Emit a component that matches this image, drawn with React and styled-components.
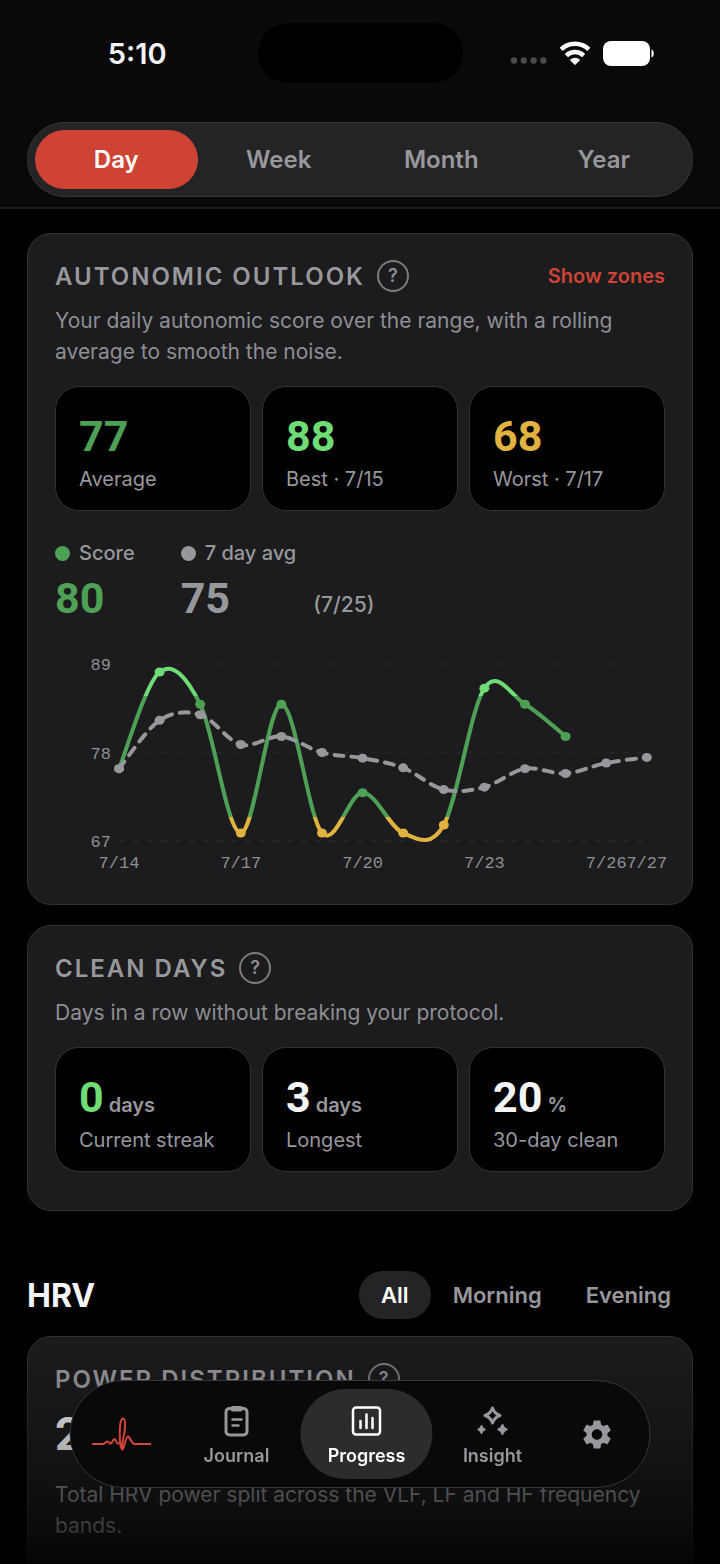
import React, { useState } from 'react';
import styled, { createGlobalStyle } from 'styled-components';
import { MdSettings } from 'react-icons/md';

const GlobalStyle = createGlobalStyle`
    * {
        box-sizing: border-box;
    }

    body {
        margin: 0;
        background: #000;
        color: #f5f5f7;
        font-family: Inter, "Liberation Sans", sans-serif;
    }

    button {
        border: 0;
        padding: 0;
        background: none;
        color: inherit;
        font: inherit;
        cursor: pointer;
    }
`;

const Screen = styled.div`
    display: flex;
    flex-direction: column;
    height: 100vh;
    overflow: hidden;
`;

const TopBar = styled.header`
    flex: none;
    padding: 23px 27px 10px;
    background: #09090b;
    border-bottom: 2px solid #1c1c1e;
`;

const StatusBar = styled.div`
    display: grid;
    grid-template-columns: 1fr 205px 1fr;
    align-items: center;
    margin-bottom: 39px;
`;

const Clock = styled.time`
    padding-right: 10px;
    text-align: center;
    font-size: 29px;
    font-weight: 600;
`;

const Island = styled.div`
    height: 60px;
    border-radius: 30px;
    background: #000;
`;

const StatusIcons = styled.div`
    display: flex;
    align-items: center;
    justify-content: flex-end;
    gap: 12px;
    padding-right: 39px;
`;

const Segments = styled.nav`
    display: grid;
    grid-template-columns: repeat(4, 1fr);
    padding: 7px;
    border: 1px solid #363639;
    border-radius: 38px;
    background: #242426;
`;

const Segment = styled.button`
    height: 59px;
    border-radius: 30px;
    font-size: 24px;
    font-weight: 600;
    color: ${(props) => (props.$active ? '#fff' : '#98989c')};
    background: ${(props) => (props.$active ? '#cf4335' : 'transparent')};
`;

const Content = styled.main`
    flex: 1;
    min-height: 0;
    overflow-y: auto;
    scrollbar-width: none;
    padding: 24px 27px 0;
`;

const Card = styled.section`
    margin-bottom: 20px;
    padding: 26px 27px ${(props) => (props.$chart ? 32 : 38)}px;
    border: 1px solid #323235;
    border-radius: 24px;
    background: #1c1c1e;
`;

const CardHeader = styled.div`
    display: flex;
    align-items: center;
    gap: 12px;
    height: 32px;
`;

const CardTitle = styled.h2`
    margin: 0;
    font-size: 24px;
    font-weight: 600;
    letter-spacing: 2px;
    color: #98989c;
`;

const HelpButton = styled.button`
    width: 32px;
    height: 32px;
    border: 2px solid #7c7c80;
    border-radius: 50%;
    font-size: 18px;
    font-weight: 600;
    line-height: 28px;
    color: #8e8e93;
`;

const ZonesButton = styled.button`
    margin-left: auto;
    font-size: 20px;
    font-weight: 600;
    color: #cf4335;
`;

const Description = styled.p`
    margin: 13px 0 19px;
    font-size: 21px;
    line-height: 31px;
    color: #8e8e93;
`;

const Tiles = styled.div`
    display: grid;
    grid-template-columns: repeat(3, 1fr);
    gap: 11px;
`;

const Tile = styled.div`
    height: 125px;
    padding: 24px 23px;
    border: 1px solid #323235;
    border-radius: 24px;
    background: #000;
`;

const BigNumber = styled.span`
    font-family: Roboto, "Liberation Sans", sans-serif;
    font-size: ${(props) => props.$size || 43}px;
    font-weight: 700;
    line-height: 50px;
    color: ${(props) => props.$color};
`;

const Unit = styled.span`
    margin-left: 5px;
    font-size: 20px;
    font-weight: 600;
    color: #98989c;
`;

const TileLabel = styled.div`
    font-size: 20px;
    line-height: 36px;
    color: #98989c;
`;

const Legend = styled.div`
    display: flex;
    align-items: flex-end;
    gap: 46px;
    margin-top: 27px;
`;

const LegendItem = styled.div`
    display: flex;
    flex-direction: column;
    gap: 5px;
`;

const LegendLabel = styled.div`
    display: flex;
    align-items: center;
    gap: 9px;
    font-size: 20px;
    font-weight: 500;
    line-height: 30px;
    color: #98989c;

    &::before {
        content: '';
        width: 15px;
        height: 15px;
        border-radius: 50%;
        background: ${(props) => props.$color};
    }
`;

const LegendDate = styled.span`
    margin-left: -29px;
    font-size: 21px;
    font-weight: 500;
    line-height: 36px;
    color: #98989c;
`;

const ChartSvg = styled.svg`
    display: block;
    width: 100%;
    height: auto;
    margin-top: 31px;
    overflow: visible;

    text {
        font-family: "Liberation Mono", monospace;
        font-size: 17px;
        fill: #8e8e93;
    }
`;

const SectionHeader = styled.div`
    display: flex;
    align-items: center;
    justify-content: space-between;
    margin: 60px 0 17px;
`;

const SectionTitle = styled.h1`
    margin: 0;
    font-size: 32px;
    font-weight: 700;
`;

const Filters = styled.div`
    display: flex;
`;

const Filter = styled.button`
    height: 48px;
    padding: 0 22px;
    border-radius: 24px;
    font-size: 22px;
    font-weight: 600;
    color: ${(props) => (props.$active ? '#fff' : '#98989c')};
    background: ${(props) => (props.$active ? '#242426' : 'transparent')};
`;

const PowerValue = styled.div`
    margin-top: 14px;
    height: 57px;
`;

const Fade = styled.div`
    position: fixed;
    left: 0;
    right: 0;
    bottom: 0;
    height: 230px;
    background: linear-gradient(transparent, rgba(0, 0, 0, 0.3) 55%, rgba(0, 0, 0, 0.6) 85%, rgba(0, 0, 0, 0.85));
    pointer-events: none;
`;

const TabBar = styled.nav`
    position: fixed;
    left: 50%;
    bottom: 76px;
    transform: translateX(-50%);
    display: flex;
    align-items: center;
    height: 108px;
    padding-right: 9px;
    border: 1px solid #363639;
    border-radius: 54px;
    background: #09090b;
`;

const Tab = styled.button`
    display: flex;
    flex-direction: column;
    align-items: center;
    justify-content: center;
    gap: 7px;
    width: ${(props) => props.$width}px;
    height: 90px;
    padding-top: 4px;
    border-radius: 45px;
    font-size: 18px;
    font-weight: 600;
    line-height: 24px;
    color: ${(props) => (props.$active ? '#fff' : '#98989c')};
    background: ${(props) => (props.$active ? '#2c2c2e' : 'transparent')};
`;

// Tab with an icon and no label
const IconTab = styled(Tab)`
    padding-top: 0;
`;

const scores = [76, 88, 84, 68, 84, 68, 73, 68, 69, 86, 84, 80];
const averages = [76, 82, 82.7, 79, 80, 78, 77.3, 76.1, 73.4, 73.7, 76, 75.4, 76.7, 77.4];
const gridValues = [89, 78, 67];
const dateLabels = [0, 3, 6, 9, 12, 13];

const GREEN = '#4ea055';
const BRIGHT = '#6fdc76';
const YELLOW = '#e0b341';
const GREY = '#98989c';

const xAt = (i) => 64 + i * 40.6;
const yAt = (value) => 10 + (89 - value) * 8.05;

// Cardinal spline through all the points
function linePath(values) {
    const points = values.map((v, i) => [xAt(i), yAt(v)]);
    let d = `M${points[0]}`;
    for (let i = 0; i < points.length - 1; i++) {
        const before = points[i - 1] || points[i];
        const from = points[i];
        const to = points[i + 1];
        const after = points[i + 2] || to;
        const c1 = [from[0] + (to[0] - before[0]) / 6, from[1] + (to[1] - before[1]) / 6];
        const c2 = [to[0] - (after[0] - from[0]) / 6, to[1] - (after[1] - from[1]) / 6];
        d += `C${c1} ${c2} ${to}`;
    }
    return d;
}

function zoneColor(value) {
    if (value >= 85) return BRIGHT;
    if (value < 70) return YELLOW;
    return GREEN;
}

function OutlookChart() {
    return (
        <ChartSvg viewBox="0 0 610 218" role="img" aria-label="Autonomic score by day">
            <defs>
                <linearGradient id="zones" gradientUnits="userSpaceOnUse" x1="0" x2="0" y1={yAt(89)} y2={yAt(67)}>
                    <stop offset={4 / 22} stopColor={BRIGHT} />
                    <stop offset={4 / 22} stopColor={GREEN} />
                    <stop offset={19 / 22} stopColor={GREEN} />
                    <stop offset={19 / 22} stopColor={YELLOW} />
                </linearGradient>
            </defs>
            {gridValues.map((value) => (
                <g key={value}>
                    <line x1="64" x2="592" y1={yAt(value)} y2={yAt(value)} stroke="#252527" strokeWidth="2" strokeDasharray="6 8" />
                    <text x="56" y={yAt(value) + 6} textAnchor="end">{value}</text>
                </g>
            ))}
            <path d={linePath(scores)} fill="none" stroke="url(#zones)" strokeWidth="4" strokeLinecap="round" />
            {scores.map((value, i) => (
                <ellipse key={i} cx={xAt(i)} cy={yAt(value)} rx="5" ry="4.5" fill={zoneColor(value)} />
            ))}
            <path d={linePath(averages)} fill="none" stroke={GREY} strokeWidth="4" strokeLinecap="round" strokeDasharray="9 8" />
            {averages.map((value, i) => (
                <ellipse key={i} cx={xAt(i)} cy={yAt(value)} rx="5" ry="4.5" fill={GREY} />
            ))}
            {dateLabels.map((i) => (
                <text key={i} x={xAt(i)} y="214" textAnchor="middle">7/{14 + i}</text>
            ))}
        </ChartSvg>
    );
}

function SignalIcons() {
    return (
        <StatusIcons>
            <svg width="37" height="24" viewBox="0 0 37 24" fill="#4b4b4d">
                <circle cx="4" cy="19.500" r="3.200" />
                <circle cx="13.800" cy="19.500" r="3.200" />
                <circle cx="23.600" cy="19.500" r="3.200" />
                <circle cx="33.400" cy="19.500" r="3.200" />
            </svg>
            <svg width="32" height="24" viewBox="0 0 32 24" fill="none" stroke="#fff" strokeWidth="4.500">
                <path d="M2.200 8.400a19.800 19.800 0 0 1 27.600 0" />
                <path d="M7.400 14.600a12.300 12.300 0 0 1 17.200 0" />
                <path d="M16 23.500l-4.600-4.500a7 7 0 0 1 9.200 0z" fill="#fff" stroke="#fff" strokeWidth="1" strokeLinejoin="round" />
            </svg>
            <svg width="51" height="25" viewBox="0 0 51 25" fill="#fff">
                <rect width="47" height="25" rx="8" />
                <path d="M48.500 8.500c3 1 3 7 0 8z" />
            </svg>
        </StatusIcons>
    );
}

function PulseLogo() {
    return (
        <svg width="60" height="34" viewBox="0 0 60 34" fill="none" stroke="#d5443a" strokeWidth="2" strokeLinecap="round" strokeLinejoin="round">
            <path d="M1 27H11C13.500 27 14 24.500 16 24.500S18 27.500 19.500 26.500C21 25.500 21.500 22 23 22S24.500 26.500 27 26.500M31 32.500C27.500 31 27 2 31.500 1.500C35.500 2 33 16 31 25C30.500 29 30 31 31 32.500C33 31 34 19.500 36.500 19.500S39.500 27 43 27H59" />
        </svg>
    );
}

function JournalIcon() {
    return (
        <svg width="32" height="32" viewBox="0 0 32 32" fill="none" stroke="currentColor" strokeWidth="3" strokeLinecap="round">
            <rect x="5.500" y="3.500" width="21" height="26.500" rx="3.500" />
            <path d="M12 14.500h9M12 20.500h6" strokeWidth="2.500" />
            <rect x="10" y="1" width="12" height="5.500" rx="2" fill="currentColor" stroke="none" />
        </svg>
    );
}

function ProgressIcon() {
    return (
        <svg width="32" height="32" viewBox="0 0 32 32" fill="none" stroke="currentColor" strokeWidth="2.500" strokeLinecap="round">
            <rect x="2.500" y="2.500" width="27" height="27" rx="3" />
            <path d="M10 16v7M16 9.500v13.500M22 13v10" />
        </svg>
    );
}

function InsightIcon() {
    return (
        <svg width="32" height="32" viewBox="0 0 32 32" fill="currentColor">
            <path d="M16 3q1.800 5.700 7.500 7.500q-5.700 1.800-7.500 7.500q-1.800-5.700-7.500-7.500q5.700-1.800 7.500-7.500z" fill="none" stroke="currentColor" strokeWidth="3" strokeLinejoin="round" />
            <path d="M5 20q1 3.500 4 4.500q-3 1-4 4.500q-1-3.500-4-4.500q3-1 4-4.500z" stroke="currentColor" strokeLinejoin="round" />
            <path d="M26 19q1.300 4 5 5.500q-3.700 1.500-5 5.500q-1.300-4-5-5.500q3.700-1.500 5-5.500z" stroke="currentColor" strokeLinejoin="round" />
        </svg>
    );
}

function App() {
    const [range, setRange] = useState('Day');
    const [filter, setFilter] = useState('All');
    const [tab, setTab] = useState('Progress');

    return (
        <Screen>
            <GlobalStyle />
            <TopBar>
                <StatusBar>
                    <Clock>5:10</Clock>
                    <Island />
                    <SignalIcons />
                </StatusBar>
                <Segments aria-label="Range">
                    {['Day', 'Week', 'Month', 'Year'].map((name) => (
                        <Segment key={name} $active={range === name} onClick={() => setRange(name)}>{name}</Segment>
                    ))}
                </Segments>
            </TopBar>

            <Content>
                <Card $chart>
                    <CardHeader>
                        <CardTitle>AUTONOMIC OUTLOOK</CardTitle>
                        <HelpButton aria-label="About autonomic outlook">?</HelpButton>
                        <ZonesButton>Show zones</ZonesButton>
                    </CardHeader>
                    <Description>Your daily autonomic score over the range, with a rolling average to smooth the noise.</Description>
                    <Tiles>
                        <Tile>
                            <BigNumber $color={GREEN}>77</BigNumber>
                            <TileLabel>Average</TileLabel>
                        </Tile>
                        <Tile>
                            <BigNumber $color={BRIGHT}>88</BigNumber>
                            <TileLabel>Best · 7/15</TileLabel>
                        </Tile>
                        <Tile>
                            <BigNumber $color={YELLOW}>68</BigNumber>
                            <TileLabel>Worst · 7/17</TileLabel>
                        </Tile>
                    </Tiles>
                    <Legend>
                        <LegendItem>
                            <LegendLabel $color={GREEN}>Score</LegendLabel>
                            <BigNumber $color={GREEN}>80</BigNumber>
                        </LegendItem>
                        <LegendItem>
                            <LegendLabel $color={GREY}>7 day avg</LegendLabel>
                            <BigNumber $color={GREY}>75</BigNumber>
                        </LegendItem>
                        <LegendDate>(7/25)</LegendDate>
                    </Legend>
                    <OutlookChart />
                </Card>

                <Card>
                    <CardHeader>
                        <CardTitle>CLEAN DAYS</CardTitle>
                        <HelpButton aria-label="About clean days">?</HelpButton>
                    </CardHeader>
                    <Description>Days in a row without breaking your protocol.</Description>
                    <Tiles>
                        <Tile>
                            <BigNumber $color={BRIGHT}>0</BigNumber>
                            <Unit>days</Unit>
                            <TileLabel>Current streak</TileLabel>
                        </Tile>
                        <Tile>
                            <BigNumber $color="#f5f5f7">3</BigNumber>
                            <Unit>days</Unit>
                            <TileLabel>Longest</TileLabel>
                        </Tile>
                        <Tile>
                            <BigNumber $color="#f5f5f7">20</BigNumber>
                            <Unit>%</Unit>
                            <TileLabel>30-day clean</TileLabel>
                        </Tile>
                    </Tiles>
                </Card>

                <SectionHeader>
                    <SectionTitle>HRV</SectionTitle>
                    <Filters>
                        {['All', 'Morning', 'Evening'].map((name) => (
                            <Filter key={name} $active={filter === name} onClick={() => setFilter(name)}>{name}</Filter>
                        ))}
                    </Filters>
                </SectionHeader>

                <Card>
                    <CardHeader>
                        <CardTitle>POWER DISTRIBUTION</CardTitle>
                        <HelpButton aria-label="About power distribution">?</HelpButton>
                    </CardHeader>
                    <PowerValue>
                        <BigNumber $color="#f5f5f7" $size={47}>2</BigNumber>
                    </PowerValue>
                    <Description>Total HRV power split across the VLF, LF and HF frequency bands.</Description>
                </Card>
            </Content>

            <Fade />
            <TabBar aria-label="Main">
                <IconTab $width={102} aria-label="Home" onClick={() => setTab('Home')}>
                    <PulseLogo />
                </IconTab>
                <Tab $width={128} $active={tab === 'Journal'} onClick={() => setTab('Journal')}>
                    <JournalIcon />
                    Journal
                </Tab>
                <Tab $width={132} $active={tab === 'Progress'} onClick={() => setTab('Progress')}>
                    <ProgressIcon />
                    Progress
                </Tab>
                <Tab $width={120} $active={tab === 'Insight'} onClick={() => setTab('Insight')}>
                    <InsightIcon />
                    Insight
                </Tab>
                <IconTab $width={88} aria-label="Settings" onClick={() => setTab('Settings')}>
                    <MdSettings size={35} />
                </IconTab>
            </TabBar>
        </Screen>
    );
}

export default App;
